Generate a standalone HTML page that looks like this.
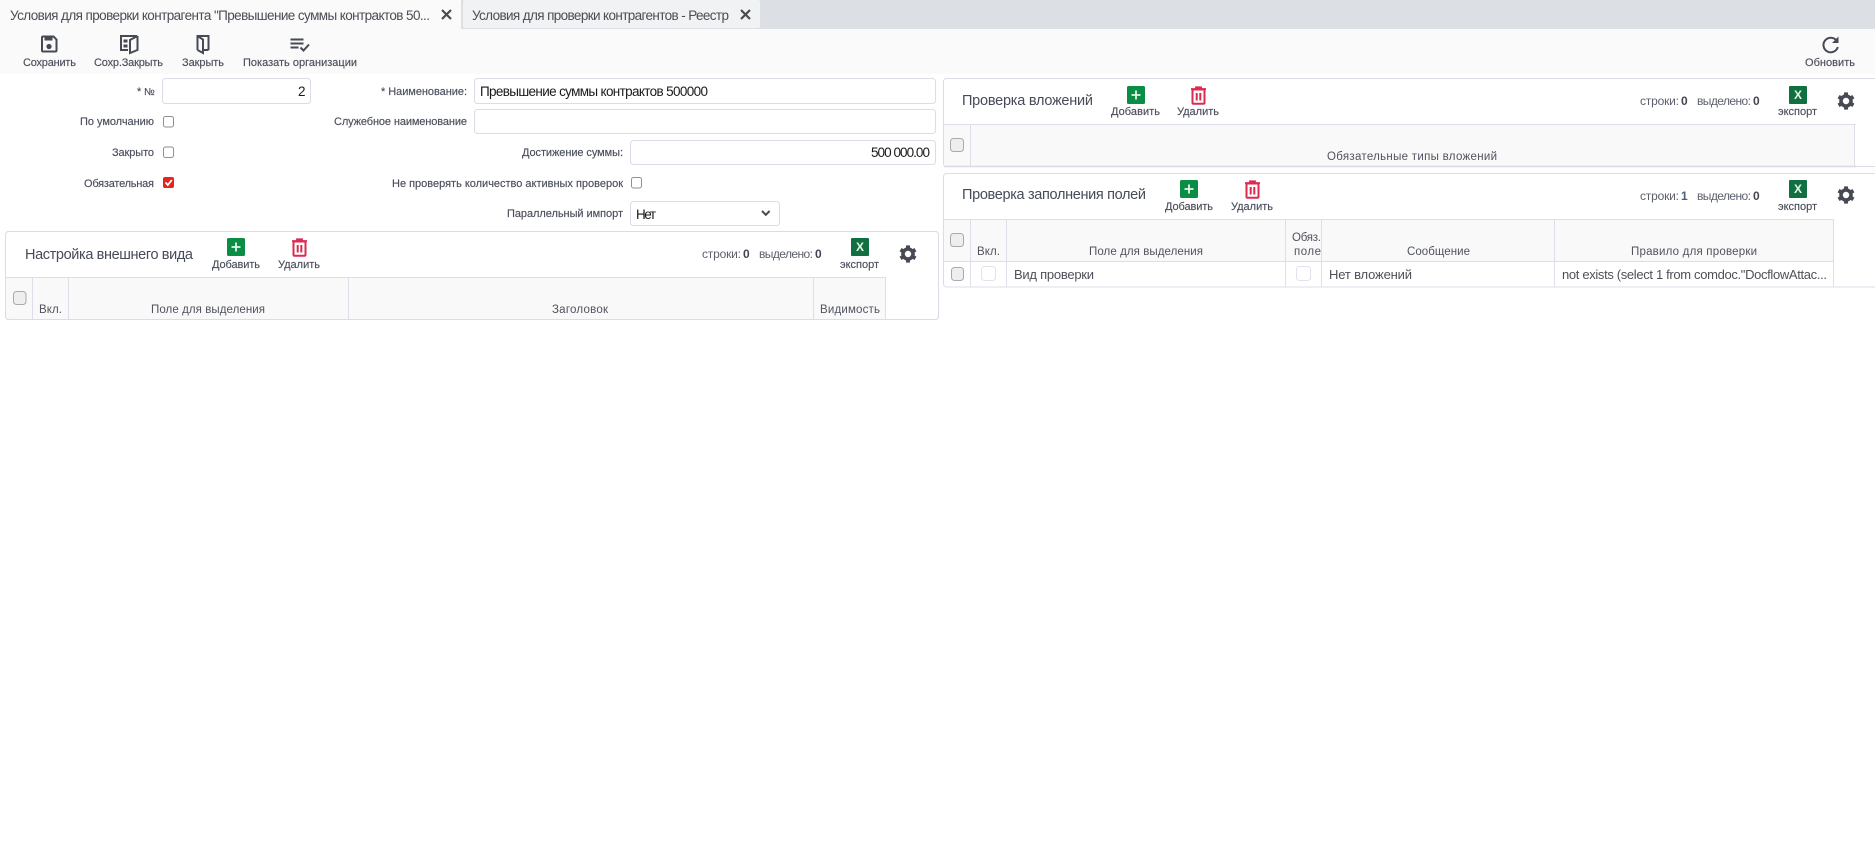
<!DOCTYPE html>
<html lang="ru"><head><meta charset="utf-8"><title>Условия для проверки контрагента</title>
<style>
html,body{margin:0;padding:0;background:#fff;width:1875px;height:849px;overflow:hidden}
svg{display:block}
text{font-family:"Liberation Sans","Noto Sans CJK SC",sans-serif;fill:#4b4f5c;font-size:11px;stroke:#4b4f5c;stroke-width:.15px}
.t{font-size:13.5px;fill:#4a4d55;stroke:none}
.h{font-size:14.5px;fill:#464b58;stroke:none}
.v{font-size:13.5px;fill:#1a1a1a;stroke:none}
.c{font-size:13px;fill:#4f5059;stroke:none}
.s{font-size:12px;fill:#5c606b;stroke:none}
.b{font-size:12px;font-weight:bold;fill:#42454f;stroke:none}
.th{font-size:11.5px;fill:#50535e;stroke:none}
.box{fill:#fff;stroke:#dcdce8;stroke-width:1}
.cb{fill:#fff;stroke:#8f8f96;stroke-width:1}
.cbh{fill:#eeeeee;stroke:#a9a9ae;stroke-width:1}
.cbw{fill:#fff;stroke:#e2e2ec;stroke-width:1}
.ln{stroke:#dedeea;stroke-width:1}
.ic{fill:none;stroke:#474a54;stroke-width:2}
</style></head><body>
<svg xmlns="http://www.w3.org/2000/svg" width="1875" height="849" viewBox="0 0 1875 849">
<defs>
<g id="add"><rect x="0" y="0" width="18" height="18" rx="1.5" fill="#0a8d45"/><path d="M9 4.500v9M4.500 9h9" stroke="#e6f5ec" stroke-width="1.800"/></g>
<g id="del"><path d="M0 2.500h15M5 2.500V.8h5v1.700" fill="none" stroke="#dc2a50" stroke-width="1.800"/><path d="M1.500 3h12v13.200a1 1 0 0 1-1 1h-10a1 1 0 0 1-1-1z" fill="none" stroke="#dc2a50" stroke-width="2"/><path d="M5.700 6.500v7.500M9.300 6.500v7.500" stroke="#dc2a50" stroke-width="2"/></g>
<g id="xl"><rect x="0" y="0" width="18" height="18" rx="1" fill="#107040"/><text x="5" y="13.200" style="font-size:12px;font-weight:bold;fill:#e8f3ec;stroke:none">X</text></g>
<g id="gear" fill="#474a54"><circle cx="0" cy="0" r="5" fill="none" stroke="#474a54" stroke-width="3.600"/>
<rect x="-2" y="-8.600" width="4" height="4"/><rect x="-2" y="-8.600" width="4" height="4" transform="rotate(60)"/><rect x="-2" y="-8.600" width="4" height="4" transform="rotate(120)"/><rect x="-2" y="-8.600" width="4" height="4" transform="rotate(180)"/><rect x="-2" y="-8.600" width="4" height="4" transform="rotate(240)"/><rect x="-2" y="-8.600" width="4" height="4" transform="rotate(300)"/></g>
</defs>

<!-- tabs -->
<rect x="0" y="0" width="1875" height="29" fill="#dcdfe3"/>
<rect x="0" y="0" width="461" height="29" fill="#fafafa"/>
<rect x="463" y="0" width="297" height="28" rx="2" fill="#f1f2f4"/>
<rect x="0" y="29" width="1875" height="45" fill="#fafafa"/>
<text class="t" x="10" y="20" textLength="420">Условия для проверки контрагента "Превышение суммы контрактов 50...</text>
<path d="M442 10l9 9M451 10l-9 9" stroke="#4a4a4f" stroke-width="2.200"/>
<text class="t" x="472" y="20" textLength="257">Условия для проверки контрагентов - Реестр</text>
<path d="M741 10l9 9M750 10l-9 9" stroke="#4a4a4f" stroke-width="2.200"/>

<!-- toolbar icons -->
<path class="ic" d="M42 37.500a1 1 0 0 1 1-1h10.500l3 3v11a1 1 0 0 1-1 1H43a1 1 0 0 1-1-1z"/>
<rect x="44.500" y="37" width="8" height="3.500" fill="#474a54"/><circle cx="49" cy="46.500" r="2.600" fill="#474a54"/>
<path class="ic" d="M128 50H121V36H137M137.500 36V50L130 53V40L137.500 36" stroke-width="1.900"/>
<rect x="123.500" y="39.500" width="4" height="3" fill="#474a54"/><rect x="123.500" y="44.500" width="4" height="3" fill="#474a54"/>
<path class="ic" d="M208.500 50H203M197.500 50V36H208.500V50M197.500 36L203 39.500V53L197.500 50" stroke-width="1.900"/>
<path class="ic" d="M290.500 39.500h13M290.500 43.500h13M290.500 47.500h8M300.500 47.500l3 3 5.500-6"/>
<path class="ic" d="M1836.500 40.500a7.300 7.300 0 1 0 1.300 6.500"/>
<path d="M1838.500 36.500v6.500h-6.500z" fill="#474a54"/>

<!-- toolbar labels -->
<text x="23" y="66" textLength="53">Сохранить</text>
<text x="94" y="66" textLength="69">Сохр.Закрыть</text>
<text x="182" y="66" textLength="42">Закрыть</text>
<text x="243" y="66" textLength="114">Показать организации</text>
<text x="1805" y="66" textLength="50">Обновить</text>

<!-- form -->
<text x="137" y="95">*</text><text x="144" y="95" textLength="10" style="font-size:10px">№</text>
<rect class="box" x="162.500" y="78.500" width="148" height="25" rx="3"/>
<text class="v" x="298" y="96">2</text>
<text x="80" y="125" textLength="74">По умолчанию</text>
<rect class="cb" x="163.500" y="116.500" width="10" height="10.500" rx="2"/>
<text x="112" y="156" textLength="42">Закрыто</text>
<rect class="cb" x="163.500" y="147" width="10" height="10.500" rx="2"/>
<text x="84" y="187" textLength="70">Обязательная</text>
<rect x="163" y="177" width="11" height="11" rx="2" fill="#e3241f"/>
<path d="M165.500 182.500l2.300 2.500 4-5" fill="none" stroke="#fff" stroke-width="1.800"/>

<text x="381" y="95" textLength="86">* Наименование:</text>
<rect class="box" x="474.500" y="78.500" width="461" height="25" rx="3"/>
<text class="v" x="480" y="96" textLength="228">Превышение суммы контрактов 500000</text>
<text x="334" y="125" textLength="133">Служебное наименование</text>
<rect class="box" x="474.500" y="109.500" width="461" height="24" rx="3"/>
<text x="522" y="156" textLength="101">Достижение суммы:</text>
<rect class="box" x="630.500" y="140.500" width="305" height="24" rx="3"/>
<text class="v" x="871" y="157" textLength="59">500 000.00</text>
<text x="392" y="187" textLength="231">Не проверять количество активных проверок</text>
<rect class="cb" x="631.500" y="177.500" width="10" height="10.500" rx="2"/>
<text x="507" y="217" textLength="116">Параллельный импорт</text>
<rect class="box" x="630.500" y="201.500" width="149" height="24" rx="3"/>
<text class="v" x="636" y="219" textLength="20">Нет</text>
<path d="M762 211l3.800 3.800 3.800-3.800" fill="none" stroke="#474a54" stroke-width="2"/>

<!-- panel 1 -->
<rect class="box" x="5.500" y="231.500" width="933" height="88" rx="3"/>
<rect x="6" y="278" width="879.500" height="41" fill="#f9f9f9"/>
<path class="ln" d="M5.500 277.500H886M32.500 277.500V319M68.500 277.500V319M348.500 277.500V319M813.500 277.500V319M885.500 277.500V319"/>
<rect x="5.500" y="231.500" width="933" height="88" rx="3" fill="none" stroke="#dcdce8"/>
<text class="h" x="25" y="259" textLength="168">Настройка внешнего вида</text>
<use href="#add" x="227" y="238"/>
<text x="212" y="268" textLength="48">Добавить</text>
<use href="#del" x="292" y="238.500"/>
<text x="278" y="268" textLength="42">Удалить</text>
<text class="s" x="702" y="258" textLength="39">строки:</text><text class="b" x="743" y="258">0</text>
<text class="s" x="759" y="258" textLength="54">выделено:</text><text class="b" x="815" y="258">0</text>
<use href="#xl" x="851" y="238"/>
<text x="840" y="268" textLength="39">экспорт</text>
<use href="#gear" x="908" y="254"/>
<rect class="cbh" x="13.500" y="291.500" width="12.500" height="13" rx="3"/>
<text class="th" x="39" y="313" textLength="23">Вкл.</text>
<text class="th" x="151" y="313" textLength="114">Поле для выделения</text>
<text class="th" x="552" y="313" textLength="56">Заголовок</text>
<text class="th" x="820" y="313" textLength="60">Видимость</text>

<!-- panel 2 -->
<rect class="box" x="943.500" y="78.500" width="935" height="88" rx="3"/>
<rect x="944" y="125" width="911" height="41" fill="#f9f9f9"/>
<path class="ln" d="M943.500 124.500H1856M970.500 124.500V166M1854.500 124.500V166"/>
<path d="M944 166.500H1856" stroke="#d9d9e4" stroke-width="1.500"/>
<text class="h" x="962" y="105" textLength="131">Проверка вложений</text>
<use href="#add" x="1127" y="86"/>
<text x="1111" y="115" textLength="49">Добавить</text>
<use href="#del" x="1191" y="86.500"/>
<text x="1177" y="115" textLength="42">Удалить</text>
<text class="s" x="1640" y="105" textLength="39">строки:</text><text class="b" x="1681" y="105">0</text>
<text class="s" x="1697" y="105" textLength="54">выделено:</text><text class="b" x="1753" y="105">0</text>
<use href="#xl" x="1789" y="86"/>
<text x="1778" y="115" textLength="39">экспорт</text>
<use href="#gear" x="1846" y="101"/>
<rect class="cbh" x="950.500" y="138.500" width="13" height="13" rx="3"/>
<text class="th" x="1327" y="160" textLength="170">Обязательные типы вложений</text>

<!-- panel 3 -->
<rect class="box" x="943.500" y="173.500" width="935" height="113.500" rx="3"/>
<rect x="944" y="220" width="889" height="41" fill="#f9f9f9"/>
<path class="ln" d="M943.500 219.500H1834M943.500 261.500H1834M970.500 219.500V287M1006.500 219.500V287M1285.500 219.500V287M1321.500 219.500V287M1554.500 219.500V287M1833.500 219.500V287"/>
<text class="h" x="962" y="199" textLength="184">Проверка заполнения полей</text>
<use href="#add" x="1180" y="180"/>
<text x="1165" y="210" textLength="48">Добавить</text>
<use href="#del" x="1245" y="180.500"/>
<text x="1231" y="210" textLength="42">Удалить</text>
<text class="s" x="1640" y="200" textLength="39">строки:</text><text class="b" x="1681" y="200" style="fill:#4a5f78">1</text>
<text class="s" x="1697" y="200" textLength="54">выделено:</text><text class="b" x="1753" y="200">0</text>
<use href="#xl" x="1789" y="180"/>
<text x="1778" y="210" textLength="39">экспорт</text>
<use href="#gear" x="1846" y="195"/>
<rect class="cbh" x="950.500" y="233.500" width="13" height="13" rx="3"/>
<text class="th" x="977" y="255" textLength="23">Вкл.</text>
<text class="th" x="1089" y="255" textLength="114">Поле для выделения</text>
<text class="th" x="1292" y="241" textLength="29">Обяз.</text>
<text class="th" x="1294" y="255" textLength="27">поле</text>
<text class="th" x="1407" y="255" textLength="63">Сообщение</text>
<text class="th" x="1631" y="255" textLength="126">Правило для проверки</text>
<rect class="cbh" x="951.500" y="267.500" width="12" height="13" rx="3"/>
<rect class="cbw" x="981.500" y="266.500" width="14" height="14" rx="3"/>
<text class="c" x="1014" y="279" textLength="80">Вид проверки</text>
<rect class="cbw" x="1296.500" y="266.500" width="14" height="14" rx="3"/>
<text class="c" x="1329" y="279" textLength="83">Нет вложений</text>
<text class="c" x="1562" y="279" textLength="265">not exists (select 1 from comdoc."DocflowAttac...</text>
</svg>
</body></html>
